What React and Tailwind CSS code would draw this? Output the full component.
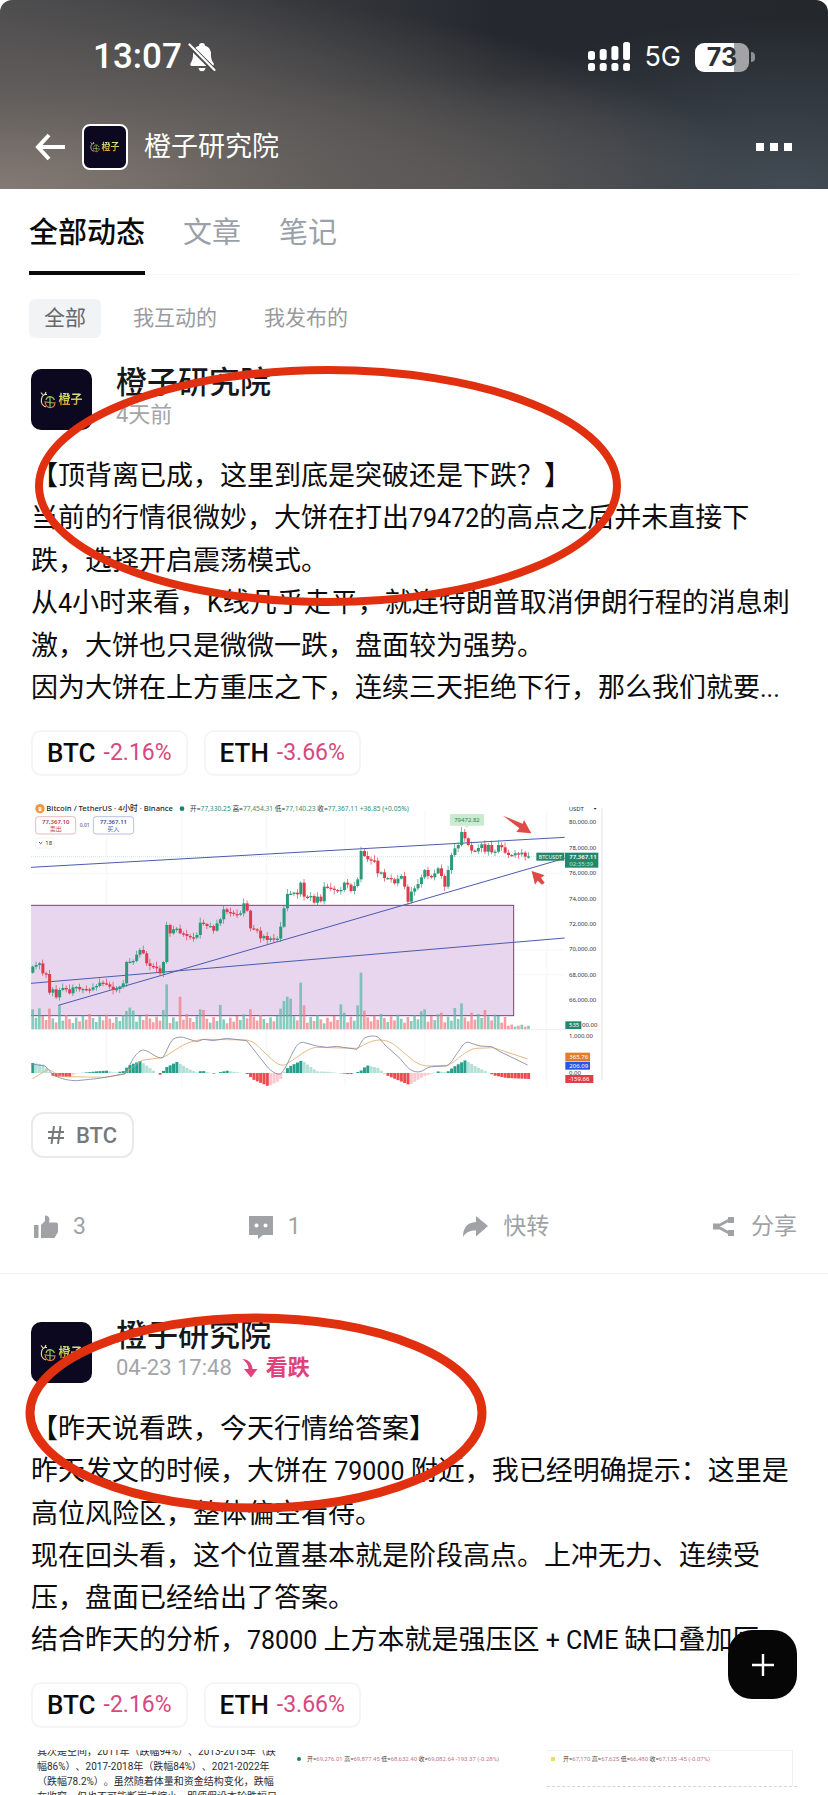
import React from "react";
import clsx from "clsx";

const UP = "#2a9a7a";
const DOWN = "#df3b4b";

// closing prices, oldest first, as y positions inside the chart
const CLOSES = [
  530, 525, 520, 550, 552, 608, 598, 622, 600, 594, 598, 610, 592, 591, 598,
  597, 598, 599, 592, 588, 578, 580, 583, 590, 600, 597, 590, 580, 516, 515,
  513, 494, 480, 490, 520, 528, 530, 535, 550, 516, 405, 430, 418, 416, 430,
  432, 438, 442, 443, 435, 398, 402, 408, 408, 422, 400, 388, 358, 366, 368,
  372, 373, 370, 340, 362, 415, 418, 422, 445, 438, 450, 445, 448, 446, 410,
  355, 312, 311, 308, 313, 278, 320, 322, 318, 338, 320, 334, 290, 293, 296,
  300, 302, 300, 278, 284, 303, 288, 268, 183, 198, 208, 211, 212, 250, 247,
  264, 264, 268, 280, 266, 258, 290, 335, 305, 295, 282, 262, 240, 258, 262,
  250, 235, 258, 290, 240, 195, 175, 165, 126, 145, 165, 182, 184, 174, 163,
  185, 165, 187, 185, 165, 172, 188, 195, 196, 190, 193, 188, 200, 199,
];

const VOLUME_SPIKES = {
  0: 60, 2: 63, 5: 62, 8: 72, 28: 55, 29: 65, 30: 56, 39: 58, 40: 135, 44: 98,
  50: 60, 51: 58, 56: 73, 65: 60, 74: 62, 75: 85, 76: 98, 77: 92, 80: 140,
  81: 72, 92: 75, 93: 50, 97: 72, 98: 170, 99: 56, 116: 54, 117: 60, 122: 50,
  126: 64, 128: 78, 131: 50, 135: 58, 139: 40,
};

const MACD_POINTS = [
  [98, 30], [128, 26], [148, 4], [160, -10], [208, -12], [225, -2], [290, 5],
  [320, 7], [345, 1], [370, 6], [385, 22], [420, 36], [440, 22], [465, 3],
  [480, -5], [500, 18], [530, 33], [570, 10], [590, 2], [605, 7], [640, -2],
  [680, 7], [740, -2], [760, -20], [805, -40], [840, -22], [850, 2], [865, 18],
  [905, 38], [950, 5], [980, 4], [1050, -4], [1080, 5], [1100, 23], [1135, 15],
  [1155, -5], [1190, -20], [1228, -36], [1270, -10], [1295, -2], [1315, 5],
  [1340, 2], [1360, 18], [1395, 38], [1430, 18], [1460, 3], [1485, -8],
  [1520, -15], [1590, -18],
];

const STEP = 10.05;

function macdAt(x) {
  const i = MACD_POINTS.findIndex((p) => p[0] > x);
  if (i < 1) return MACD_POINTS[0][1];
  const [x0, v0] = MACD_POINTS[i - 1];
  const [x1, v1] = MACD_POINTS[i];
  return v0 + ((v1 - v0) * (x - x0)) / (x1 - x0);
}

const candles = CLOSES.map((close, i) => {
  const open = i === 0 ? 548 : CLOSES[i - 1];
  const x = 98 + i * STEP;
  const macd = macdAt(x);
  const growing = Math.abs(macd) >= Math.abs(macdAt(x - STEP));
  return {
    x,
    open,
    close,
    up: close <= open,
    wickTop: Math.min(open, close) - 3 - ((i * 7) % 13),
    wickBottom: Math.max(open, close) + 3 + ((i * 5) % 11),
    volume:
      VOLUME_SPIKES[i] || (i > 141 ? 8 + (i % 3) * 3 : 18 + ((i * 17) % 29)),
    macd,
    macdColor:
      macd > 0
        ? growing ? "#26a08d" : "#b5e0d8"
        : growing ? "#ee4b50" : "#fbc9cf",
  };
});

const AXIS = [
  ["80,000.00", 97],
  ["78,000.00", 174],
  ["76,000.00", 250],
  ["74,000.00", 326],
  ["72,000.00", 402],
  ["70,000.00", 478],
  ["68,000.00", 554],
  ["66,000.00", 630],
  ["1,000.00", 738],
  ["0.00", 848],
];

const COINS = [
  { symbol: "BTC", change: "-2.16%" },
  { symbol: "ETH", change: "-3.66%" },
];

function PriceChart() {
  return (
    <svg
      viewBox="93 30 1716 870"
      className="block w-full max-w-[572px]"
      fontFamily="'Noto Sans', 'Noto Sans CJK SC', sans-serif"
      role="img"
      aria-label="BTCUSDT"
    >
      {/* grid */}
      <g stroke="#f1f2f4" strokeWidth="2">
        {[250, 480, 554].map((y) => (
          <line key={y} x1="93" x2="1694" y1={y} y2={y} />
        ))}
        {[320, 545, 800, 1035, 1275, 1640].map((x) => (
          <line key={x} x1={x} x2={x} y1="60" y2="890" />
        ))}
      </g>
      <line x1="93" x2="1694" y1="200" y2="200" stroke="#bfe0d6" strokeWidth="2" strokeDasharray="3 3" />

      <rect x="90" y="346" width="1451" height="331" fill="#e8d5ee" stroke="#71408f" strokeWidth="3" />

      {/* volume */}
      {candles.map((c) => (
        <rect
          key={c.x}
          x={c.x - 4}
          y={718 - c.volume}
          width="8"
          height={c.volume}
          fill={c.up ? "#5fb8a8" : "#ef7f86"}
          opacity="0.75"
        />
      ))}
      <line x1="93" x2="1800" y1="719" y2="719" stroke="#e3e5e8" strokeWidth="2" />

      {/* trend lines */}
      <g stroke="#4a5cb0" strokeWidth="3">
        <line x1="93" y1="232" x2="1694" y2="142" />
        <line x1="175" y1="646" x2="1694" y2="205" />
        <line x1="93" y1="580" x2="1694" y2="444" />
      </g>

      {/* candles */}
      {candles.map((c) => (
        <g key={c.x} fill={c.up ? UP : DOWN}>
          <rect x={c.x - 1} y={c.wickTop} width="2" height={c.wickBottom - c.wickTop} />
          <rect
            x={c.x - 4}
            y={Math.min(c.open, c.close)}
            width="9"
            height={Math.max(4, Math.abs(c.open - c.close))}
          />
        </g>
      ))}

      {/* macd */}
      {candles.map((c) => (
        <rect
          key={c.x}
          x={c.x - 4}
          y={c.macd > 0 ? 849 - c.macd : 849}
          width="9"
          height={Math.abs(c.macd)}
          fill={c.macdColor}
        />
      ))}
      <g fill="none" strokeWidth="2.5" strokeLinejoin="round">
        <path
          stroke="#dfab6c"
          d="M97 866 L145 838 C160 845 180 860 200 860 L320 862 L375 850 C400 830 415 815 430 810 L485 803 C510 795 540 765 570 757 C590 750 605 748 620 748 L740 750 C765 755 775 770 780 775 L820 812 C835 826 850 828 860 822 L900 795 C920 780 940 772 950 772 L1070 775 C1090 768 1110 750 1140 750 C1165 750 1185 765 1190 770 L1240 812 C1260 826 1275 828 1290 828 L1340 826 C1360 820 1370 808 1380 800 C1400 785 1415 776 1430 775 L1480 773 L1583 807"
        />
        <path
          stroke="#8087a0"
          d="M93 822 L135 828 L160 855 C185 868 210 872 230 872 L290 866 L375 852 L400 805 C412 788 422 780 430 780 C450 782 470 808 488 803 C500 790 505 760 520 747 C530 741 540 741 550 742 L590 755 L610 748 L640 752 L680 745 L740 752 L800 828 C815 846 830 854 840 852 C855 845 870 800 885 775 C895 760 900 757 910 757 L950 768 L980 772 L1010 769 L1070 778 C1080 770 1083 750 1095 743 C1110 737 1125 736 1135 742 L1160 770 L1200 805 C1220 830 1230 845 1255 846 C1270 846 1280 830 1295 830 L1340 828 C1355 820 1365 797 1375 785 C1385 770 1393 755 1405 757 L1440 768 L1475 770 L1500 785 L1583 825"
        />
      </g>

      {/* legend */}
      <circle cx="120" cy="56" r="14" fill="#f0983a" />
      <text x="120" y="63" fontSize="18" fontWeight="700" fill="#fff" textAnchor="middle">
        ₿
      </text>
      <text x="139" y="64" fontSize="23" fill="#23262d" fontWeight="500">
        Bitcoin / TetherUS · 4小时 · Binance
      </text>
      <circle cx="546" cy="56" r="7" fill="#19846a" />
      <text x="570" y="63" fontSize="20" fill="#2c8f78">
        <tspan fill="#333">开=</tspan>77,330.25 <tspan fill="#333">高=</tspan>77,454.31{" "}
        <tspan fill="#333">低=</tspan>77,140.23 <tspan fill="#333">收=</tspan>77,367.11
        +36.85 (+0.05%)
      </text>
      <g fill="#fff" strokeWidth="2" textAnchor="middle">
        <rect x="107" y="80" width="120" height="52" rx="8" stroke="#d59aa5" />
        <rect x="280" y="80" width="121" height="52" rx="8" stroke="#93a5d2" />
        <text x="167" y="102" fontSize="18" fontWeight="600" fill="#b53a50">77,367.10</text>
        <text x="167" y="124" fontSize="18" fill="#c8485a">卖出</text>
        <text x="340" y="102" fontSize="18" fontWeight="600" fill="#38509a">77,367.11</text>
        <text x="340" y="124" fontSize="18" fill="#4465b5">买入</text>
        <text x="254" y="111" fontSize="15" fill="#444">0.01</text>
      </g>
      <rect x="107" y="144" width="56" height="30" rx="4" fill="#fff" stroke="#eceef0" strokeWidth="2" />
      <path d="M117 156 l5 5 l5 -5" fill="none" stroke="#333" strokeWidth="2.5" />
      <text x="136" y="165" fontSize="18" fill="#333">18</text>

      {/* high marker */}
      <rect x="1350" y="72" width="102" height="35" rx="3" fill="#c9ecd0" />
      <path d="M1394 107 h12 l-6 8 z" fill="#c9ecd0" />
      <text x="1401" y="96" fontSize="18" fill="#3c7d5c" textAnchor="middle">
        79472.82
      </text>

      {/* arrows */}
      <g fill="#e04a46">
        <path d="M1509 77 L1568 101 L1572 90 L1594 130 L1549 126 L1558 115 Z" />
        <path d="M1595 243 L1634 256 L1623 263 L1634 278 L1626 284 L1613 272 L1605 284 Z" />
      </g>

      {/* price axis */}
      <g fontSize="18" fill="#2e3138">
        <text x="1706" y="62">USDT</text>
        <path d="M1781 54 h9 l-4.500 5 z" />
        {AXIS.map(([label, y]) => (
          <text key={label} x="1707" y={y + 6}>
            {label}
          </text>
        ))}
        <text x="1746" y="712">00.00</text>
      </g>
      <g fontSize="18" fill="#fff">
        <rect x="1609" y="188" width="84" height="24" fill="#23876b" />
        <text x="1651" y="206" fontSize="16" textAnchor="middle">BTCUSDT</text>
        <rect x="1695" y="188" width="100" height="45" fill="#23876b" />
        <text x="1708" y="206" fontWeight="600">77,367.11</text>
        <text x="1708" y="227" fill="#b9e2d5">02:35:39</text>
        <rect x="1696" y="694" width="48" height="23" fill="#23876b" />
        <text x="1707" y="712">535</text>
        <rect x="1696" y="788" width="74" height="25" fill="#e07d28" />
        <text x="1708" y="807">365.76</text>
        <rect x="1696" y="815" width="74" height="24" fill="#2857e0" />
        <text x="1708" y="833">206.09</text>
        <rect x="1696" y="855" width="84" height="24" fill="#e23c48" />
        <text x="1706" y="873">-159.66</text>
      </g>
      <line x1="1806" x2="1806" y1="55" y2="870" stroke="#dfe1e4" strokeWidth="3" />
    </svg>
  );
}

function Avatar({ small }) {
  return (
    <div
      className={clsx(
        "flex shrink-0 items-center justify-center overflow-hidden bg-[#0b0820]",
        small
          ? "size-[46px] gap-px rounded-lg border-2 border-white"
          : "size-[61px] gap-0.5 rounded-[10px]"
      )}
    >
      <svg
        viewBox="0 0 16 18"
        className={small ? "h-3 w-[10px]" : "h-[18px] w-4"}
        fill="none"
        strokeWidth="1.2"
        aria-hidden="true"
      >
        <path stroke="#e9dcae" d="M6 16 C2 15 1 11 1.500 8 C2 5 4 3 7 3.500 M3 4 L1 1.500 M5 3 L6 1" />
        <path stroke="#e5793f" d="M5 10 C5 15 8 17 11 16.500 C14 16 15 13 15 11" />
        <path stroke="#8fc25a" d="M6 9 C7 5 12 4 14.500 9 M10 6 V16 M6 11 L14 12" />
      </svg>
      <span
        className={clsx(
          "bg-linear-to-b from-[#d9f0a0] via-[#c9c94a] to-[#e8702e] bg-clip-text font-bold text-transparent",
          small ? "text-[9px] leading-3" : "text-xs leading-4"
        )}
      >
        橙子
      </span>
    </div>
  );
}

function StatusBar() {
  return (
    <div className="flex h-7 items-center justify-between pr-[73px] pl-[93px]">
      <div className="flex items-center gap-1.5">
        <time className="text-[35px] leading-7 font-medium">13:07</time>
        <svg viewBox="0 0 28 30" className="h-[30px] w-7" aria-hidden="true">
          <path
            fill="currentColor"
            d="M14 1 c2 0 3 1.200 3 2.800 c4 1.200 6 4.200 6 8.200 c0 5 1 7 2.500 9 c.8 1.200 .3 3 -1.300 3 H4 c-1.600 0 -2.100 -1.800 -1.300 -3 C4 19 5 17 5 12 c0 -4 2 -7 6 -8.200 C11 2.200 12 1 14 1 Z M10.500 26 h7 c-.4 2 -1.700 3.300 -3.500 3.300 s-3.100 -1.300 -3.500 -3.300 Z"
          />
          <path stroke="#4b4a4c" strokeWidth="5" d="M1 3 L27 29" />
          <path stroke="currentColor" strokeWidth="2.200" strokeLinecap="round" d="M1.500 2.500 L26.500 28" />
        </svg>
      </div>
      <div className="flex items-center font-['Inter',sans-serif]">
        <svg viewBox="0 0 42 30" className="h-[30px] w-[42px]" fill="currentColor" aria-hidden="true">
          {[9, 7, 4, 0].map((top, i) => (
            <g key={top}>
              <rect x={i * 11.7} y={top} width="7" height={18 - top} rx="2.500" />
              <rect x={i * 11.7} y="21" width="7" height="8" rx="2.500" />
            </g>
          ))}
        </svg>
        <span className="ml-[14px] text-[27px] leading-7">5G</span>
        <div className="ml-[14px] flex h-[29px] w-[54px] items-center justify-center overflow-hidden rounded-[9px] bg-linear-to-r from-white from-73% to-[#a1a3a5] to-73% text-[#2d3036]">
          <span className="text-[25px] leading-7 font-bold">73</span>
        </div>
        <span className="ml-0.5 h-2.5 w-1 rounded-r-full bg-[#8d9093]" />
      </div>
    </div>
  );
}

function Header() {
  return (
    <header className="h-[189px] shrink-0 rounded-t-xl bg-[radial-gradient(ellipse_90%_110%_at_0%_100%,#857b75_0%,#615d5b_45%,transparent_100%),radial-gradient(ellipse_45%_90%_at_95%_100%,#434c55_0%,transparent_100%),radial-gradient(ellipse_40%_60%_at_55%_100%,#504e4f_0%,transparent_100%),linear-gradient(90deg,#4a4a4c_0%,#3a3b3f_30%,#25292f_60%,#24282d_100%)] pt-[43px] text-white">
      <StatusBar />
      <div className="mt-[53px] flex h-[46px] items-center pr-9 pl-[34px]">
        <button type="button" aria-label="返回" className="mr-4">
          <svg viewBox="0 0 32 28" className="h-7 w-8" fill="none" stroke="currentColor" strokeWidth="4" aria-hidden="true">
            <path d="M31 14 H4 M15 2 L4 14 L15 26" />
          </svg>
        </button>
        <Avatar small />
        <h1 className="ml-4 flex-1 text-[27px] leading-8">橙子研究院</h1>
        <button type="button" aria-label="更多" className="flex gap-[6px]">
          <span className="size-2 bg-white" />
          <span className="size-2 bg-white" />
          <span className="size-2 bg-white" />
        </button>
      </div>
    </header>
  );
}

function Tabs() {
  return (
    <nav className="flex flex-col">
      <div className="mx-[29px] flex gap-[38px] border-b border-[#f8f8f9]">
        {["全部动态", "文章", "笔记"].map((tab, i) => (
          <button
            key={tab}
            type="button"
            className={clsx(
              "-mb-px h-[86px] border-b-4 pt-2 text-[29px]",
              i === 0
                ? "border-[#0a0a0a] font-medium text-[#0a0a0a]"
                : "border-transparent text-[#9aa1a8]"
            )}
          >
            {tab}
          </button>
        ))}
      </div>
      <div className="mx-[29px] mt-6 flex gap-[17px] text-[21px] text-[#999a9d]">
        {["全部", "我互动的", "我发布的"].map((item, i) => (
          <button
            key={item}
            type="button"
            className={clsx(
              "h-[39px] rounded-md px-[15px]",
              i === 0 && "bg-[#f2f3f5] text-[#65676b]"
            )}
          >
            {item}
          </button>
        ))}
      </div>
    </nav>
  );
}

// numbers and latin words run a little smaller than the chinese text
function Line({ text }) {
  return (
    <p className="whitespace-nowrap">
      {text.split(/([\x20-\x7e]+)/).map((part, i) =>
        i % 2 ? (
          <span key={i} className="text-[25px] whitespace-pre">
            {part}
          </span>
        ) : (
          part
        )
      )}
    </p>
  );
}

function Post({ time, bearish, lines, circle, children }) {
  return (
    <article className="relative px-[31px] pt-12 first:pt-[31px]">
      <div className="flex gap-6">
        <Avatar />
        <div>
          <h2 className="text-[31px] leading-7 font-medium text-[#16171a]">橙子研究院</h2>
          <div className="mt-[3px] flex items-center text-[22px] leading-[30px] text-[#a4a5a8]">
            <time>{time}</time>
            {bearish && (
              <span className="flex items-center font-bold text-[#e0427c]">
                <svg viewBox="0 0 16 20" className="mr-2 ml-2.5 h-5 w-4" fill="currentColor" aria-hidden="true">
                  <path d="M0 1 C5 1 10 4 10.500 11 H15.500 L9 19.500 L2 11 H6.500 C6.500 7 4 3.500 0 1 Z" />
                </svg>
                看跌
              </span>
            )}
          </div>
        </div>
      </div>

      <div className="mt-[25px] overflow-hidden text-[27px] leading-[42px] text-[#0c0c0e]">
        {lines.map((line) => (
          <Line key={line} text={line} />
        ))}
      </div>

      <div className="mt-5 flex gap-4">
        {COINS.map((coin) => (
          <a
            key={coin.symbol}
            href="#"
            className="flex h-[46px] items-center gap-2 rounded-[10px] border-2 border-[#f4f5f6] px-[14px]"
          >
            <span className="text-[26px] font-medium text-[#0c0c0e]">{coin.symbol}</span>
            <span className="text-[23px] text-[#d5497f]">{coin.change}</span>
          </a>
        ))}
      </div>

      {children}
      {circle}
    </article>
  );
}

function Actions() {
  return (
    <div className="mt-[54px] flex h-[61px] items-start justify-between pl-[3px] text-[23px] leading-[30px] text-[#a0a2a5]">
      <button type="button" className="flex items-center gap-[15px]">
        <svg viewBox="0 0 24 24" className="size-6" fill="currentColor" aria-hidden="true">
          <path d="M0 10 H4.500 V23 H0 Z M7 10 L11 6 V1.500 C11 .5 12 .3 13 .8 C15.500 2 16 4 15 7.500 H22 Q24 7.500 24 9.500 V17 L20.500 23 H7 Z" />
        </svg>
        3
      </button>
      <button type="button" className="flex items-center gap-[15px]">
        <svg viewBox="0 0 24 24" className="size-6" fill="currentColor" aria-hidden="true">
          <path
            fillRule="evenodd"
            d="M0 1 H24 V20 H14 L9 24 V20 H0 Z M7.500 8.500 a2 2 0 1 0 .01 0 Z M16.500 8.500 a2 2 0 1 0 .01 0 Z"
          />
        </svg>
        1
      </button>
      <button type="button" className="flex items-center gap-[15px]">
        <svg viewBox="0 0 25 24" className="h-6 w-[25px]" fill="currentColor" aria-hidden="true">
          <path d="M13 1 L25 11 L13 21.500 V15.500 C7 15.500 3 17 0 22 C0 13 4 7.500 13 7 Z" />
        </svg>
        快转
      </button>
      <button type="button" className="flex items-center gap-[15px]">
        <svg viewBox="0 0 24 24" className="size-6" fill="currentColor" aria-hidden="true">
          <path d="M16 2 H22 V8 H16 Z M16 15 H22 V21 H16 Z M1 8.500 H7 V14.500 H1 Z" />
          <path stroke="currentColor" strokeWidth="2.800" fill="none" d="M19 4 L5 11.500 L19 19" />
        </svg>
        分享
      </button>
    </div>
  );
}

function Quote({ values }) {
  return (
    <p className="text-[6px] leading-3 whitespace-nowrap text-[#c4778a]">
      {values.map(([label, value]) => (
        <span key={label}>
          <span className="text-[#444]">{label}</span>
          {value}{" "}
        </span>
      ))}
    </p>
  );
}

function Gallery() {
  return (
    <div className="mt-[22px] grid h-60 grid-cols-3 gap-2">
      <div className="overflow-hidden px-[6px] text-[10px] leading-[15px] text-[#2b2d31]">
        <div className="-mt-[6px] whitespace-nowrap [text-spacing-trim:space-all]">
          <p>其次是空间，2011年（跌幅94%）、2013-2015年（跌</p>
          <p>幅86%）、2017-2018年（跌幅84%）、2021-2022年</p>
          <p>（跌幅78.2%）。虽然随着体量和资金结构变化，跌幅</p>
          <p>在收窄，但也不可能断崖式缩小。即便假设本轮跌幅只</p>
        </div>
      </div>
      <div className="overflow-hidden pl-2">
        <div className="flex h-[17px] items-center gap-1.5">
          <span className="size-1 rounded-full bg-[#19846a]" />
          <Quote
            values={[
              ["开=", "69,276.01"],
              ["高=", "69,877.45"],
              ["低=", "68,632.40"],
              ["收=", "69,082.64 -193.37 (-0.28%)"],
            ]}
          />
        </div>
      </div>
      <div className="h-[37px] overflow-hidden border-b border-dashed border-[#d4d6d9] pr-1">
        <div className="flex h-full items-start gap-2 border-t border-r border-[#f0f1f3] pt-0.5 pl-1">
          <span className="mt-1 size-1 bg-[#e3e063]" />
          <Quote
            values={[
              ["开=", "67,170"],
              ["高=", "67,625"],
              ["低=", "66,480"],
              ["收=", "67,135 -45 (-0.07%)"],
            ]}
          />
        </div>
      </div>
    </div>
  );
}

export default function App() {
  return (
    <div className="flex h-screen flex-col overflow-hidden bg-white font-['Roboto','Noto_Sans_CJK_SC',sans-serif]">
      <Header />
      <Tabs />
      <main className="min-h-0 flex-1 overflow-hidden">
        <Post
          time="4天前"
          lines={[
            "【顶背离已成，这里到底是突破还是下跌？】",
            "当前的行情很微妙，大饼在打出79472的高点之后并未直接下",
            "跌，选择开启震荡模式。",
            "从4小时来看，K线几乎走平，就连特朗普取消伊朗行程的消息刺",
            "激，大饼也只是微微一跌，盘面较为强势。",
            "因为大饼在上方重压之下，连续三天拒绝下行，那么我们就要...",
          ]}
          circle={
            <svg
              viewBox="0 0 588 242"
              className="pointer-events-none absolute top-[27px] left-[34px] h-[242px] w-[588px]"
              aria-hidden="true"
            >
              <ellipse cx="294" cy="121" rx="289" ry="116" fill="none" stroke="#e0300f" strokeWidth="8" />
            </svg>
          }
        >
          <div className="mt-6">
            <PriceChart />
          </div>
          <a
            href="#"
            className="mt-[22px] flex h-[46px] w-fit items-center gap-3 rounded-xl border-2 border-[#e9eaec] px-[15px] text-[22px] font-medium text-[#77797d]"
          >
            <svg viewBox="0 0 16 18" className="h-[18px] w-4" fill="none" stroke="currentColor" strokeWidth="2" aria-hidden="true">
              <path d="M0 6 H16 M0 12 H16 M6 0 L3.500 18 M12.500 0 L10 18" />
            </svg>
            BTC
          </a>
          <Actions />
        </Post>
        <hr className="border-[#eff0f1]" />
        <Post
          time="04-23 17:48"
          bearish
          lines={[
            "【昨天说看跌，今天行情给答案】",
            "昨天发文的时候，大饼在 79000 附近，我已经明确提示：这里是",
            "高位风险区，整体偏空看待。",
            "现在回头看，这个位置基本就是阶段高点。上冲无力、连续受",
            "压，盘面已经给出了答案。",
            "结合昨天的分析，78000 上方本就是强压区 + CME 缺口叠加区",
          ]}
          circle={
            <svg
              viewBox="0 0 462 202"
              className="pointer-events-none absolute top-[38px] left-[25px] h-[202px] w-[462px]"
              aria-hidden="true"
            >
              <ellipse cx="231" cy="101" rx="226" ry="95" fill="none" stroke="#e0300f" strokeWidth="9" />
            </svg>
          }
        >
          <Gallery />
        </Post>
      </main>
      <button
        type="button"
        aria-label="发布"
        className="fixed right-[31px] bottom-24 flex size-[69px] items-center justify-center rounded-3xl bg-[#060606] text-white"
      >
        <svg viewBox="0 0 22 22" className="size-[22px]" stroke="currentColor" strokeWidth="2.400" aria-hidden="true">
          <path d="M11 0 V22 M0 11 H22" />
        </svg>
      </button>
    </div>
  );
}
